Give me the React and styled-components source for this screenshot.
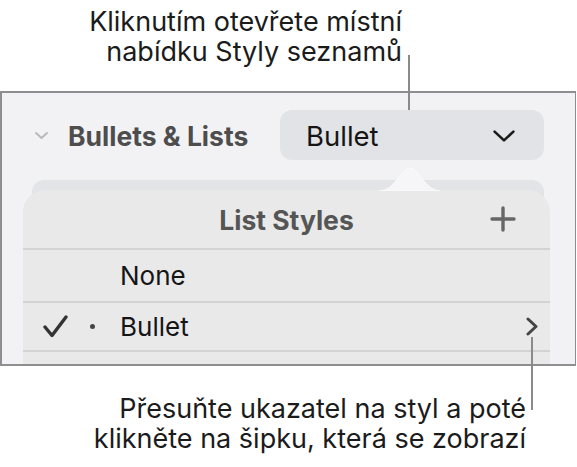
import React from 'react';
import styled, { createGlobalStyle } from 'styled-components';

const Global = createGlobalStyle`
  html, body {
    margin: 0;
    padding: 0;
    background: #fff;
  }
  body {
    font-family: Inter, "Noto Sans", "Liberation Sans", sans-serif;
    -webkit-font-smoothing: antialiased;
  }
`;

const Page = styled.div`
  position: relative;
  width: 577px;
  height: 467px;
  overflow: hidden;
`;

const Callout = styled.div`
  text-align: right;
  font-size: 27px;
  line-height: 30px;
  color: #1b1b1b;
  padding-right: ${(p) => p.right}px;
  padding-top: ${(p) => p.top}px;
`;

const Leader = styled.div`
  position: absolute;
  width: 2px;
  background: #8a8a8a;
  left: ${(p) => p.x}px;
  top: ${(p) => p.y1}px;
  height: ${(p) => p.y2 - p.y1}px;
`;

const Panel = styled.div`
  box-sizing: border-box;
  width: 576px;
  height: 275px;
  margin-top: 24px;
  border: 2px solid #8e8e8e;
  border-right-width: 1px;
  background: #f2f2f4;
  overflow: hidden;
`;

const HeaderRow = styled.div`
  display: flex;
  align-items: center;
  padding: 17px 31px 0 32px;
`;

const SectionTitle = styled.div`
  font-size: 26.5px;
  font-weight: 700;
  color: #4d4d4d;
  margin-left: 19px;
  padding-top: 2px;
`;

const Dropdown = styled.div`
  margin-left: auto;
  box-sizing: border-box;
  width: 264px;
  height: 50px;
  border-radius: 12px;
  background: #e2e3e6;
  display: flex;
  align-items: center;
  justify-content: space-between;
  padding: 2px 28px 0 26px;
  font-size: 27.5px;
  color: #151515;
`;

const Behind = styled.div`
  margin: 20px 31px 0 30px;
  padding-top: 10px;
  border-radius: 12px 12px 0 0;
  background: #e3e4e7;
`;

const Popover = styled.div`
  position: relative;
  margin: 0 -6px 0 -9px;
  background: #e9e9e9;
  border-radius: 22px 22px 0 0;
`;

const Notch = styled.svg`
  position: absolute;
  left: 357px;
  top: -23px;
`;

const PopHeader = styled.div`
  display: grid;
  grid-template-columns: 1fr auto 1fr;
  align-items: center;
  height: 58px;
  padding-right: 34px;
`;

const PopTitle = styled.div`
  grid-column: 2;
  font-size: 26.5px;
  font-weight: 700;
  color: #555;
  padding-left: 34px;
  padding-top: 2px;
`;

const PlusBox = styled.div`
  justify-self: end;
  display: flex;
`;

const Row = styled.div`
  display: grid;
  grid-template-columns: 44px 33px 1fr auto;
  align-items: center;
  height: ${(p) => p.h}px;
  border-top: 2px solid #d3d3d3;
  padding: 0 12px 0 20px;
  font-size: 26px;
  color: #151515;
`;

const Dot = styled.span`
  width: 5px;
  height: 5px;
  border-radius: 50%;
  background: #444;
  margin-left: 3px;
`;

const Cell = styled.div`
  display: flex;
  align-items: center;
`;

function ChevronDown({ w, h, color, stroke }) {
  return (
    <svg width={w} height={h} viewBox={`0 0 ${w} ${h}`}>
      <polyline
        points={`${stroke},${stroke} ${w / 2},${h - stroke} ${w - stroke},${stroke}`}
        fill="none"
        stroke={color}
        strokeWidth={stroke}
        strokeLinecap="round"
        strokeLinejoin="round"
      />
    </svg>
  );
}

function StyleRow({ checked, bullet, label, arrow, h }) {
  return (
    <Row h={h}>
      <Cell>
        {checked && (
          <svg width="25" height="23" viewBox="0 0 25 23">
            <polyline points="2,12 9,20.5 23,2" fill="none" stroke="#333" strokeWidth="3.4" strokeLinecap="round" strokeLinejoin="round" />
          </svg>
        )}
      </Cell>
      <Cell>{bullet && <Dot />}</Cell>
      <div>{label}</div>
      <Cell>
        {arrow && (
          <svg width="12" height="19" viewBox="0 0 12 19">
            <polyline points="2,2 10,9.5 2,17" fill="none" stroke="#444" strokeWidth="3" strokeLinecap="round" strokeLinejoin="round" />
          </svg>
        )}
      </Cell>
    </Row>
  );
}

export default function App() {
  return (
    <Page>
      <Global />
      <Callout right={175} top={7}>
        Kliknutím otevřete místní
        <br />
        nabídku Styly seznamů
      </Callout>
      <Panel>
        <HeaderRow>
          <ChevronDown w={15} h={9} color="#b9b9b9" stroke={2} />
          <SectionTitle>Bullets &amp; Lists</SectionTitle>
          <Dropdown>
            <span>Bullet</span>
            <ChevronDown w={24} h={14} color="#1a1a1a" stroke={2.6} />
          </Dropdown>
        </HeaderRow>
        <Behind>
          <Popover>
            <Notch width="60" height="24" viewBox="0 0 60 24">
              <path d="M0 24 C 14 24, 22 1, 30 1 C 38 1, 46 24, 60 24 Z" fill="#f6f6f8" stroke="#fbfbfc" strokeWidth="1" />
            </Notch>
            <PopHeader>
              <PopTitle>List Styles</PopTitle>
              <PlusBox>
                <svg width="26" height="26" viewBox="0 0 26 26">
                  <path d="M13 2 V24 M2 13 H24" stroke="#666" strokeWidth="3.4" strokeLinecap="round" />
                </svg>
              </PlusBox>
            </PopHeader>
            <StyleRow h={51} label="None" />
            <StyleRow h={47} checked bullet label="Bullet" arrow />
            <StyleRow h={47} label="" />
          </Popover>
        </Behind>
      </Panel>
      <Callout right={51} top={28}>
        Přesuňte ukazatel na styl a poté
        <br />
        klikněte na šipku, která se zobrazí
      </Callout>
      <Leader x={408} y1={55} y2={110} />
      <Leader x={531} y1={337} y2={410} />
    </Page>
  );
}
